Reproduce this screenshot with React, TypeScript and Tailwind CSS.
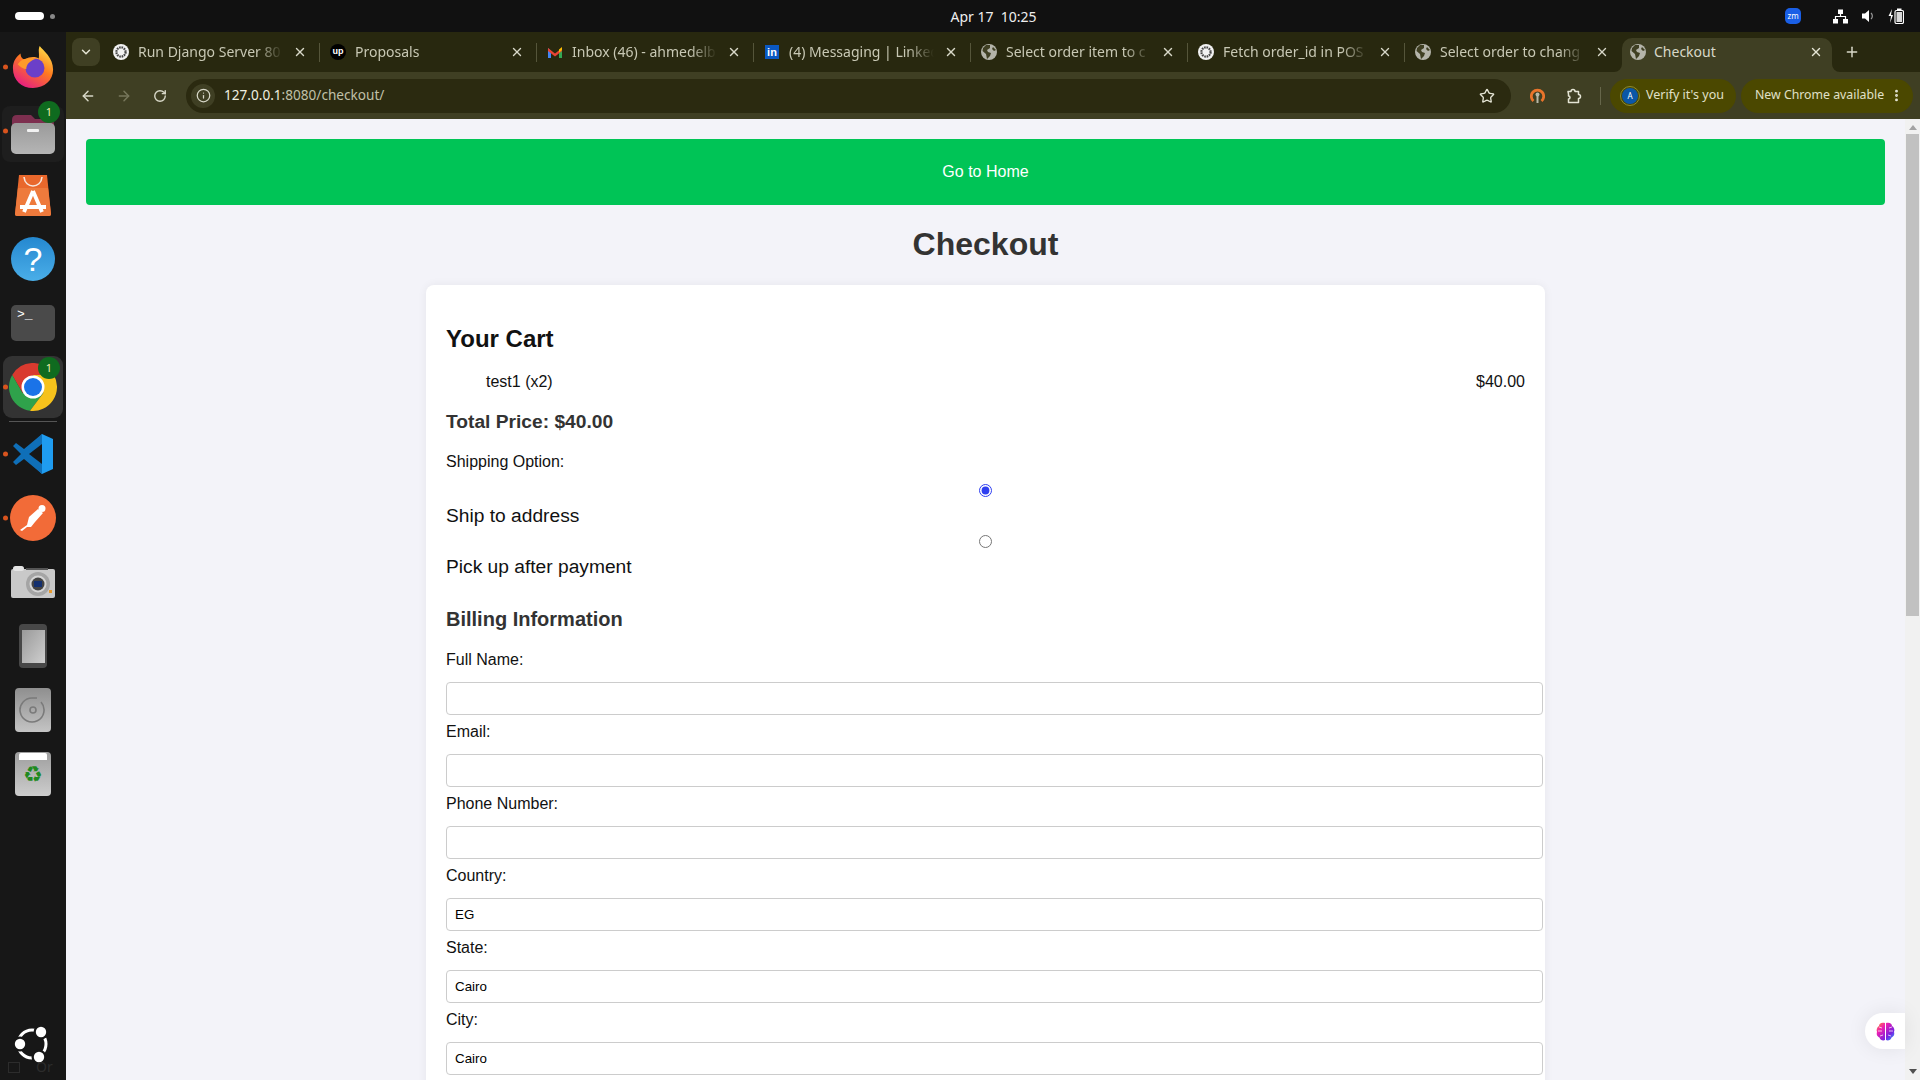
import { ChevronDown, ArrowLeft, ArrowRight, RotateCw, Info, Star, EllipsisVertical, Plus, X } from 'lucide-react';

const tabs = [
  { title: 'Run Django Server 80', icon: 'gpt' },
  { title: 'Proposals', icon: 'up' },
  { title: 'Inbox (46) - ahmedelb', icon: 'gmail' },
  { title: '(4) Messaging | Linked', icon: 'in' },
  { title: 'Select order item to c', icon: 'globe' },
  { title: 'Fetch order_id in POS', icon: 'gpt' },
  { title: 'Select order to chang', icon: 'globe' },
];

const fields = [
  { label: 'Full Name:', value: '' },
  { label: 'Email:', value: '' },
  { label: 'Phone Number:', value: '' },
  { label: 'Country:', value: 'EG' },
  { label: 'State:', value: 'Cairo' },
  { label: 'City:', value: 'Cairo' },
];

const GlobeIcon = () => (
  <svg width="16" height="16" viewBox="0 0 16 16">
    <circle cx="8" cy="8" r="8" fill="#b4b4aa" />
    <path d="M5 1 L9 1 L9 4 L6 6 L7 8 L10 9 L9 12 L6 15 L5 10 L1.5 7 L2 4 Z" fill="#3f3f23" />
    <path d="M12 3 L15 6 L13 7 L11 5 Z" fill="#3f3f23" />
  </svg>
);

const TabIcon = ({ kind }: { kind: string }) => {
  if (kind === 'gpt') {
    return (
      <svg width="16" height="16" viewBox="0 0 16 16">
        <circle cx="8" cy="8" r="8" fill="#f2f2f2" />
        <circle cx="8" cy="8" r="4.6" fill="none" stroke="#444" strokeWidth="2.2" strokeDasharray="1.6 0.8" />
      </svg>
    );
  }
  if (kind === 'up') {
    return (
      <div className="w-[16px] h-[16px] rounded-full bg-black text-white text-[9px] font-bold leading-[15px] text-center font-['Liberation_Sans',sans-serif]">up</div>
    );
  }
  if (kind === 'gmail') {
    return (
      <svg width="14" height="12" viewBox="0 0 14 12">
        <path d="M0 2 L0 12 L3 12 L3 5 Z" fill="#4285f4" />
        <path d="M14 2 L14 12 L11 12 L11 5 Z" fill="#34a853" />
        <path d="M0 2 L7 7.5 L7 10.5 L0 5 Z" fill="#ea4335" />
        <path d="M14 2 L7 7.5 L7 10.5 L14 5 Z" fill="#ea4335" />
        <path d="M11 3.5 L14 1 L14 4 L11 6.5 Z" fill="#fbbc04" />
      </svg>
    );
  }
  if (kind === 'in') {
    return (
      <div className="w-[14px] h-[14px] bg-[#0a58c2] text-white text-[11px] font-bold leading-[14px] text-center font-['Liberation_Sans',sans-serif]">in</div>
    );
  }
  return <GlobeIcon />;
};

const Tab = ({ title, icon, last }: { title: string; icon: string; last: boolean }) => (
  <div className="flex items-center h-[40px] w-[217px] shrink-0 pl-[10px]">
    <div className="w-[16px] flex justify-center shrink-0"><TabIcon kind={icon} /></div>
    <div className="ml-[9px] mb-[2px] w-[145px] overflow-hidden whitespace-nowrap text-[14px] text-[#c8c8b4] [mask-image:linear-gradient(to_right,black_82%,transparent)]">{title}</div>
    <X size={14} strokeWidth={2.4} className="ml-[10px] shrink-0 text-[#d8d8c8]" />
    {!last && <div className="w-px h-[19px] bg-[#55553a] ml-[12px] shrink-0" />}
  </div>
);

const Badge = () => (
  <div className="absolute left-[38px] top-[2px] w-[22px] h-[22px] rounded-full bg-[#0f6b1f] text-[#f5f0b0] text-[11px] leading-[22px] text-center">1</div>
);

const RunDot = () => (
  <div className="absolute left-[3px] top-1/2 -translate-y-1/2 w-[5px] h-[5px] rounded-full bg-[#d9541e]" />
);

const Slot = ({ children, dot }: { children: React.ReactNode; dot?: boolean }) => (
  <div className="relative w-[66px] h-[64px] shrink-0 flex items-center justify-center">
    {dot && <RunDot />}
    {children}
  </div>
);

const Dock = () => (
  <div className="w-[66px] shrink-0 bg-[#171717] flex flex-col pt-[3px] relative overflow-hidden">
    <Slot dot>
      <svg width="44" height="44" viewBox="0 0 44 46">
        <defs>
          <linearGradient id="fx" x1="0.8" y1="0" x2="0.2" y2="1">
            <stop offset="0" stopColor="#ffe14a" />
            <stop offset="0.45" stopColor="#ff7a1f" />
            <stop offset="1" stopColor="#e5168a" />
          </linearGradient>
        </defs>
        <path d="M29 1 C33 6 43 13 43 26 C43 37 34 45 22 45 C10 45 1 37 1 24 C1 17 5 12 9 9 C9 13 11 15 14 15 C18 12 24 12 28 14 C29 9 27 5 29 1 Z" fill="url(#fx)" />
        <circle cx="24" cy="24" r="10" fill="#6b3fc9" />
        <path d="M6 20 C12 12 20 14 26 14 C19 16 15 20 15 25 C12 25 9 23 6 20 Z" fill="#ff9a2a" />
      </svg>
    </Slot>
    <Slot dot>
      <div className="w-[62px] h-[56px] mt-[6px] rounded-[8px] bg-[#1e1e1e] flex items-center justify-center">
        <svg width="44" height="40" viewBox="0 0 44 40">
          <defs>
            <linearGradient id="fold" x1="0" y1="0" x2="0" y2="1">
              <stop offset="0" stopColor="#9a9a9a" />
              <stop offset="1" stopColor="#b5b5b5" />
            </linearGradient>
          </defs>
          <path d="M1 6 Q1 1 6 1 L20 1 L24 5 L38 5 Q43 5 43 10 L43 20 L1 20 Z" fill="#7d2f4f" />
          <rect x="0" y="9" width="44" height="31" rx="5" fill="url(#fold)" />
          <rect x="16" y="15" width="12" height="3" rx="1" fill="#f2f2f2" />
        </svg>
      </div>
      <Badge />
    </Slot>
    <Slot>
      <svg width="36" height="42" viewBox="0 0 36 42">
        <path d="M4 1 L32 1 L36 40 Q36 42 34 42 L2 42 Q0 42 0 40 Z" fill="#e9682c" />
        <path d="M3 14 L33 14 L36 40 Q36 42 34 42 L2 42 Q0 42 0 40 Z" fill="#ee7a3c" />
        <path d="M9 3 C10 15 26 15 27 3" fill="none" stroke="#f6e6dc" strokeWidth="1.6" />
        <path d="M18 17 L9 38 M18 17 L27 38 M5 33 L31 33" stroke="#fff" strokeWidth="3.8" fill="none" />
      </svg>
    </Slot>
    <Slot>
      <div className="w-[44px] h-[44px] rounded-full bg-gradient-to-b from-[#2488d0] to-[#4aaee8] text-white text-[34px] leading-[44px] text-center font-['Liberation_Sans',sans-serif]">?</div>
    </Slot>
    <Slot>
      <div className="w-[44px] h-[36px] rounded-[5px] bg-[#4a4a4a] text-white text-[13px] leading-[20px] pl-[6px] font-['Liberation_Mono',monospace]">&gt;_</div>
    </Slot>
    <Slot dot>
      <div className="w-[60px] h-[62px] rounded-[9px] bg-[#333] flex items-center justify-center">
        <svg width="48" height="48" viewBox="0 0 48 48">
          <path d="M24 12 L44.8 12 A24 24 0 0 0 3.2 12 L13.6 30 Z" fill="#d93a2f" />
          <path d="M13.6 30 L3.2 12 A24 24 0 0 0 21 47.8 L34.4 30 Z" fill="#2fa24b" />
          <path d="M34.4 30 L21 47.8 A24 24 0 0 0 44.8 12 L24 12 Z" fill="#f6c21c" />
          <circle cx="24" cy="24" r="11.5" fill="#fff" />
          <circle cx="24" cy="24" r="9" fill="#1a73e8" />
        </svg>
      </div>
      <Badge />
    </Slot>
    <div className="ml-[9px] mt-[2px] w-[48px] h-px shrink-0 bg-[#555]" />
    <Slot dot>
      <svg width="42" height="42" viewBox="0 0 42 42">
        <path d="M30 1 L41 6 L41 36 L30 41 L12 23 Z" fill="#1f9cf0" />
        <path d="M30 1 L30 41 L12 26 L4 32 L1 29 L9 21 L1 13 L4 10 L12 16 Z" fill="#0f6fb8" />
        <path d="M30 11 L30 31 L17 21 Z" fill="#171717" />
      </svg>
    </Slot>
    <Slot dot>
      <div className="w-[46px] h-[46px] rounded-full bg-[#f26b38] flex items-center justify-center">
        <svg width="30" height="30" viewBox="0 0 30 30">
          <path d="M2 27 L9 22 L11 14 L20 6 L25 10 L17 19 L13 24 L9 24 L4 28 Z" fill="#fff" />
          <circle cx="24" cy="5.5" r="3.5" fill="#fff" />
        </svg>
      </div>
    </Slot>
    <Slot>
      <svg width="44" height="32" viewBox="0 0 44 32">
        <rect x="0" y="3" width="44" height="29" rx="2" fill="#c9c9c9" />
        <rect x="2" y="0" width="11" height="5" rx="2.5" fill="#e4e4e4" />
        <rect x="15" y="2" width="22" height="2" fill="#555" />
        <circle cx="27" cy="18" r="12" fill="#a5a5a5" />
        <circle cx="27" cy="18" r="8.5" fill="#d5d5d5" />
        <circle cx="27" cy="18" r="6.5" fill="#444" />
        <rect x="23" y="15" width="8" height="6" fill="#14306f" />
        <rect x="38" y="24" width="3" height="3" fill="#e89a2c" />
      </svg>
    </Slot>
    <Slot>
      <div className="w-[28px] h-[44px] rounded-[4px] bg-[#484848] flex items-center justify-center">
        <div className="w-[23px] h-[33px] bg-gradient-to-br from-[#9a9a9a] to-[#cfcfcf]" />
      </div>
    </Slot>
    <Slot>
      <div className="w-[36px] h-[44px] rounded-[4px] bg-gradient-to-b from-[#8f8f8f] to-[#c4c4c4] flex items-center justify-center">
        <svg width="28" height="28" viewBox="0 0 28 28">
          <path d="M22 6 A12 12 0 1 1 14 2 L18 2" fill="none" stroke="#7a7a7a" strokeWidth="1.6" />
          <circle cx="14" cy="14" r="3" fill="none" stroke="#7a7a7a" strokeWidth="1.6" />
        </svg>
      </div>
    </Slot>
    <Slot>
      <div className="w-[36px] h-[44px] rounded-[4px] bg-gradient-to-b from-[#9e9e9e] to-[#cdcdcd] flex flex-col items-center">
        <div className="w-[28px] h-[7px] bg-white rounded-t-[2px] mt-[1px]" />
        <div className="text-[#1f8a1f] text-[22px] leading-[30px] font-['DejaVu_Sans',sans-serif]">♻</div>
      </div>
    </Slot>
    <div className="flex-1" />
    <svg width="38" height="38" viewBox="0 0 38 38" className="ml-[13px] mb-[17px] shrink-0">
      <circle cx="19" cy="19" r="14" fill="none" stroke="#fff" strokeWidth="3" />
      <circle cx="28" cy="7" r="7.5" fill="#171717" />
      <circle cx="7" cy="19" r="7.5" fill="#171717" />
      <circle cx="26" cy="32" r="7.5" fill="#171717" />
      <circle cx="28" cy="7" r="5.2" fill="#fff" />
      <circle cx="7" cy="19" r="5.2" fill="#fff" />
      <circle cx="26" cy="32" r="5.2" fill="#fff" />
    </svg>
    <div className="absolute left-[8px] bottom-[6px] flex items-center gap-[16px] text-[14px] leading-[14px] text-[#2c2c2c] whitespace-nowrap">
      <div className="w-[12px] h-[11px] border border-[#2c2c2c]" />
      <span>Or</span>
    </div>
  </div>
);

const ChromeBar = () => (
  <div className="shrink-0">
    <div className="h-[40px] bg-[#28280f] flex items-center pl-[6px]">
      <div className="w-[28px] h-[28px] rounded-[8px] bg-[#3f3f23] flex items-center justify-center mr-[3px] shrink-0">
        <ChevronDown size={14} strokeWidth={2.5} className="text-[#e4e4d4]" />
      </div>
      {tabs.map((t, i) => <Tab key={t.title} title={t.title} icon={t.icon} last={i === tabs.length - 1} />)}
      <div className="relative w-[210px] h-[34px] self-end bg-[#3f3f23] rounded-t-[10px] flex items-center pl-[8px] pr-[9px] pb-[6px] shrink-0">
        <svg width="8" height="8" viewBox="0 0 8 8" className="absolute left-[-8px] bottom-0">
          <path d="M8 0 A8 8 0 0 1 0 8 L8 8 Z" fill="#3f3f23" />
        </svg>
        <svg width="8" height="8" viewBox="0 0 8 8" className="absolute right-[-8px] bottom-0">
          <path d="M0 0 A8 8 0 0 0 8 8 L0 8 Z" fill="#3f3f23" />
        </svg>
        <GlobeIcon />
        <div className="ml-[8px] mb-[2px] flex-1 text-[14px] text-[#d8d8c8]">Checkout</div>
        <X size={14} strokeWidth={2.4} className="text-[#e4e4d4]" />
      </div>
      <Plus size={16} strokeWidth={2.2} className="ml-[12px] text-[#d8d8c8] shrink-0" />
    </div>
    <div className="h-[47px] bg-[#3f3f23] flex items-center pl-[14px] pr-[7px]">
      <ArrowLeft size={16} strokeWidth={2.2} className="text-[#d8d8c8] shrink-0" />
      <ArrowRight size={16} strokeWidth={2.2} className="ml-[20px] text-[#77775c] shrink-0" />
      <RotateCw size={14} strokeWidth={2.4} className="ml-[21px] text-[#d8d8c8] shrink-0" />
      <div className="ml-[19px] w-[1325px] h-[34px] rounded-full bg-[#2b2a10] flex items-center pl-[5px] pr-[16px] shrink-0">
        <div className="w-[24px] h-[24px] rounded-full bg-[#3f3f23] flex items-center justify-center shrink-0">
          <Info size={15} className="text-[#d8d8c8]" />
        </div>
        <div className="ml-[9px] flex-1 text-[13.6px] text-[#c0c0a8]"><span className="text-[#f0f0e0]">127.0.0.1</span>:8080/checkout/</div>
        <Star size={16} strokeWidth={2} className="text-[#e4e4d4]" />
      </div>
      <svg width="15" height="17" viewBox="0 0 15 17" className="ml-[19px] shrink-0">
        <path d="M3.5 14 A6.2 6.2 0 1 1 11.5 14" fill="none" stroke="#e9742b" strokeWidth="2.8" />
        <circle cx="7.5" cy="7.5" r="2" fill="#b8b8a8" />
        <rect x="6.5" y="8" width="2" height="8" fill="#b8b8a8" />
      </svg>
      <svg width="16" height="16" viewBox="0 0 16 16" className="ml-[21px] shrink-0">
        <path d="M2 3.5 H5 A2 2 0 0 1 9 3.5 H12.5 V6.5 A2 2 0 0 1 12.5 10.5 V14.5 H2.5 V11 A1.5 1.5 0 0 0 2.5 8 V6 Z" fill="none" stroke="#e4e4d4" strokeWidth="1.5" strokeLinejoin="round" />
      </svg>
      <div className="w-px h-[18px] bg-[#66664a] ml-[18px] shrink-0" />
      <div className="ml-[9px] h-[34px] w-[126px] rounded-full bg-[#4b4800] flex items-center pl-[12px] shrink-0">
        <div className="w-[16px] h-[16px] rounded-full bg-[#0b57a8] outline-1 outline-offset-1 outline-[#8a8a30] text-white text-[8px] leading-[16px] text-center shrink-0">A</div>
        <span className="ml-[8px] text-[12.5px] text-[#e0e0c8] whitespace-nowrap">Verify it's you</span>
      </div>
      <div className="ml-[5px] h-[34px] w-[172px] rounded-full bg-[#4b4800] flex items-center pl-[14px] pr-[9px] shrink-0">
        <span className="flex-1 text-[12.3px] text-[#e0e0c8] whitespace-nowrap">New Chrome available</span>
        <EllipsisVertical size={15} strokeWidth={2.6} className="text-[#e4e4d4] shrink-0" />
      </div>
    </div>
  </div>
);

const Checkout = () => (
  <div className="flex-1 min-w-0 overflow-hidden bg-[#f3f3f9] font-['Liberation_Sans',Arial,sans-serif] text-[#111] px-[20px]">
    <div className="mt-[20px] h-[66px] rounded-[4px] bg-[#00c456] text-white text-[16px] flex items-center justify-center">Go to Home</div>
    <h1 className="mt-[21px] text-[32px] leading-[37px] font-bold text-[#333] text-center">Checkout</h1>
    <div className="mx-auto mt-[22px] w-[1119px] bg-white rounded-[8px] shadow-[0_0_10px_rgba(0,0,0,0.06)] pl-[20px] pr-[20px] pb-[20px] pt-[40px]">
      <h2 className="text-[24px] leading-[28px] font-bold">Your Cart</h2>
      <div className="mt-[20px] flex justify-between pl-[40px] text-[16px] leading-[18px]">
        <span>test1 (x2)</span>
        <span>$40.00</span>
      </div>
      <div className="mt-[19px] text-[19.2px] leading-[23px] font-bold text-[#333]">Total Price: $40.00</div>
      <div className="mt-[20px] text-[16px] leading-[18px]">Shipping Option:</div>
      <div className="mt-[13px] flex justify-center pr-[1px]">
        <input type="radio" name="ship" defaultChecked className="appearance-auto w-[13px] h-[13px] accent-[#2f3ff0]" />
      </div>
      <div className="mt-[8px] text-[19.2px] leading-[22px]">Ship to address</div>
      <div className="mt-[8px] flex justify-center pr-[1px]">
        <input type="radio" name="ship" className="appearance-auto w-[13px] h-[13px]" />
      </div>
      <div className="mt-[8px] text-[19.2px] leading-[22px]">Pick up after payment</div>
      <h3 className="mt-[29px] text-[20px] leading-[24px] font-bold text-[#333]">Billing Information</h3>
      <div className="mt-[20px]">
        {fields.map(f => (
          <div key={f.label}>
            <div className="text-[16px] leading-[18px] mb-[13px]">{f.label}</div>
            <input
              readOnly
              value={f.value}
              className="block w-[1097px] max-w-none h-[33px] border border-[#ccc] rounded-[4px] px-[8px] text-[13.33px] text-black mb-[8px] bg-white"
            />
          </div>
        ))}
      </div>
    </div>
  </div>
);

const Scrollbar = () => (
  <div className="w-[15px] shrink-0 bg-[#f1f1f1] flex flex-col items-center">
    <div className="mt-[6px] w-0 h-0 border-x-[4px] border-x-transparent border-b-[5px] border-b-[#a3a3a3]" />
    <div className="mt-[4px] w-[13px] h-[482px] bg-[#c1c1c1]" />
    <div className="flex-1" />
    <div className="mb-[6px] w-0 h-0 border-x-[4px] border-x-transparent border-t-[5px] border-t-[#505050]" />
  </div>
);

export default function App() {
  return (
    <div className="w-[1920px] h-[1080px] overflow-hidden flex flex-col bg-[#111] font-['Noto_Sans',Roboto,sans-serif]">
      <div className="h-[32px] shrink-0 bg-[#111111] flex items-center pl-[15px] pr-[16px]">
        <div className="w-[29px] h-[8px] rounded-full bg-white shrink-0" />
        <div className="w-[5px] h-[5px] rounded-full bg-[#888] ml-[6px] shrink-0" />
        <div className="flex-1 text-center text-[14px] text-[#eeeeee] pl-[147px]">Apr 17&nbsp;&nbsp;10:25</div>
        <div className="w-[16px] h-[16px] rounded-[5px] bg-[#1a5fe6] text-white text-[8px] leading-[16px] text-center mr-[32px] shrink-0">zm</div>
        <svg width="15" height="15" viewBox="0 0 15 15" className="mr-[14px] shrink-0">
          <rect x="5" y="0.5" width="5" height="4.5" fill="#fff" />
          <rect x="0" y="10" width="5" height="4.5" fill="#fff" />
          <rect x="10" y="10" width="5" height="4.5" fill="#fff" />
          <path d="M7.5 5 V7.5 M2.5 10 V7.5 H12.5 V10" fill="none" stroke="#fff" strokeWidth="1.2" />
        </svg>
        <svg width="14" height="14" viewBox="0 0 14 14" className="mr-[12px] shrink-0">
          <path d="M0 4.5 H3 L7 1 V13 L3 9.5 H0 Z" fill="#fff" />
          <path d="M9 4 A4 4 0 0 1 9 10" fill="none" stroke="#999" strokeWidth="1.2" />
        </svg>
        <svg width="16" height="16" viewBox="0 0 16 16" className="shrink-0">
          <path d="M4 1 L0.5 8 H3 L2 15 L5 7 H3 Z" fill="#fff" />
          <rect x="7" y="2.5" width="8.5" height="13" rx="1.5" fill="none" stroke="#fff" strokeWidth="1.2" />
          <rect x="9" y="0.5" width="4.5" height="2" fill="#fff" />
          <rect x="8.5" y="4" width="5.5" height="10" fill="#d8d8d8" />
        </svg>
      </div>
      <div className="flex-1 flex min-h-0">
        <Dock />
        <div className="flex-1 min-w-0 flex flex-col">
          <ChromeBar />
          <div className="flex-1 flex min-h-0 relative">
            <Checkout />
            <Scrollbar />
            <div className="absolute right-[15px] top-[894px] w-[40px] h-[36px] rounded-l-full bg-white shadow-[0_0_20px_rgba(0,0,0,0.08)] flex items-center justify-center">
              <svg width="19" height="19" viewBox="0 0 19 19">
                <defs>
                  <linearGradient id="br" x1="0" y1="0" x2="1" y2="1">
                    <stop offset="0" stopColor="#ff8a2a" />
                    <stop offset="0.3" stopColor="#f01fb0" />
                    <stop offset="0.7" stopColor="#7a20e0" />
                    <stop offset="1" stopColor="#22a8ff" />
                  </linearGradient>
                </defs>
                <path d="M9 1 C5 0 3 2 3 4 C1 5 0 8 1 10 C0 13 2 15 3.5 15.5 C4 18 7 19 9 18 Z M10 1 C14 0 16 2 16 4 C18 5 19 8 18 10 C19 13 17 15 15.5 15.5 C15 18 12 19 10 18 Z" fill="url(#br)" />
                <path d="M2 9 H6 M13 9 H17 M3 5 L6 6 M16 5 L13 6 M4 14 L7 13 M15 14 L12 13" stroke="#fff" strokeWidth="0.7" fill="none" />
              </svg>
            </div>
          </div>
        </div>
      </div>
    </div>
  );
}
